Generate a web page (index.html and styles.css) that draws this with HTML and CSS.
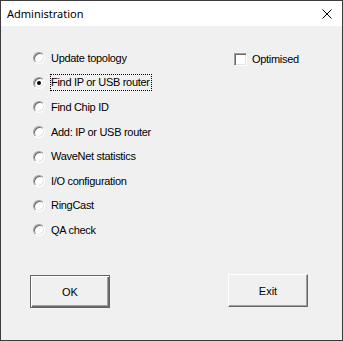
FILE: index.html
```html
<!DOCTYPE html>
<html lang="en">
<head>
  <meta charset="UTF-8">
  <title>Administration</title>
  <link rel="stylesheet" href="styles.css">
</head>
<body>
  <div class="window">
    <div class="titlebar">
      <span class="title">Administration</span>
      <svg class="close" width="10" height="10" viewBox="0 0 10 10">
        <path d="M0.5 0.5 L9.5 9.5 M9.5 0.5 L0.5 9.5" stroke="#000" stroke-width="1" fill="none"/>
      </svg>
    </div>
    <div class="content">
      <div class="top">
        <ul class="options">
          <li class="option"><span class="radio"></span><span class="label">Update topology</span></li>
          <li class="option"><span class="radio checked"></span><span class="label focus">Find IP or USB router</span></li>
          <li class="option"><span class="radio"></span><span class="label">Find Chip ID</span></li>
          <li class="option"><span class="radio"></span><span class="label">Add: IP or USB router</span></li>
          <li class="option"><span class="radio"></span><span class="label">WaveNet statistics</span></li>
          <li class="option"><span class="radio"></span><span class="label">I/O configuration</span></li>
          <li class="option"><span class="radio"></span><span class="label">RingCast</span></li>
          <li class="option"><span class="radio"></span><span class="label">QA check</span></li>
        </ul>
        <div class="check">
          <span class="box"></span><span class="label">Optimised</span>
        </div>
      </div>
      <div class="buttons">
        <button class="btn default">OK</button>
        <button class="btn">Exit</button>
      </div>
    </div>
  </div>
</body>
</html>
```
FILE: styles.css
```css
/* Classic dialog */
body {
  margin: 0;
  font-family: "Liberation Sans", Arial, sans-serif;
  font-size: 11px;
  color: #000;
}
.window {
  width: 343px;
  height: 341px;
  box-sizing: border-box;
  border: 1px solid #3c3c3c;
  display: flex;
  flex-direction: column;
  background: #f0f0f0;
}
.titlebar {
  height: 25px;
  background: #fff;
  display: flex;
  align-items: center;
  justify-content: space-between;
  padding: 0 10px 0 6px;
}
.title {
  font-family: "Noto Sans", "Open Sans", sans-serif;
  font-size: 11px;
  margin-top: -1px;
}
.content {
  flex: 1;
  display: flex;
  flex-direction: column;
  padding: 20px 34px 32px 32px;
}
.top {
  display: flex;
  align-items: flex-start;
}
.options {
  list-style: none;
  margin: 0;
  padding: 0;
  width: 201px;
}
.option {
  height: 24.6px;
  display: flex;
  align-items: center;
}
.radio {
  width: 12px;
  height: 12px;
  box-sizing: border-box;
  border-radius: 50%;
  background: #fff;
  border: 1px solid;
  border-color: #a0a0a0 #fff #fff #a0a0a0;
  box-shadow: inset 1px 1px 0 #696969, inset -1px -1px 0 #e3e3e3;
  margin-right: 5px;
  position: relative;
}
.radio.checked::after {
  content: "";
  position: absolute;
  left: 3px;
  top: 3px;
  width: 4px;
  height: 4px;
  border-radius: 50%;
  background: #000;
}
.label {
  padding: 1px 1px 2px 0;
  border: 1px dotted transparent;
  letter-spacing: -0.3px;
}
.label.focus {
  border-color: #000;
}
.check {
  display: flex;
  align-items: center;
  margin-top: 5px;
}
.box {
  width: 13px;
  height: 13px;
  box-sizing: border-box;
  background: #fff;
  border: 1px solid;
  border-color: #a0a0a0 #fff #fff #a0a0a0;
  box-shadow: inset 1px 1px 0 #696969, inset -1px -1px 0 #e3e3e3;
  margin-right: 4px;
}
.buttons {
  margin-top: auto;
  margin-left: -3px;
  display: flex;
  justify-content: space-between;
  align-items: flex-end;
}
.btn {
  font-family: "Liberation Sans", Arial, sans-serif;
  font-size: 11px;
  width: 80px;
  height: 33px;
  background: #f0f0f0;
  border: 1px solid;
  border-color: #fff #696969 #696969 #fff;
  box-shadow: inset -1px -1px 0 #a0a0a0;
  padding: 0;
  margin-bottom: 1px;
}
.btn.default {
  margin-bottom: 0;
  border-color: #646464;
  box-shadow: inset 1px 1px 0 #fff, inset -1px -1px 0 #696969, inset -2px -2px 0 #a0a0a0;
}
```
